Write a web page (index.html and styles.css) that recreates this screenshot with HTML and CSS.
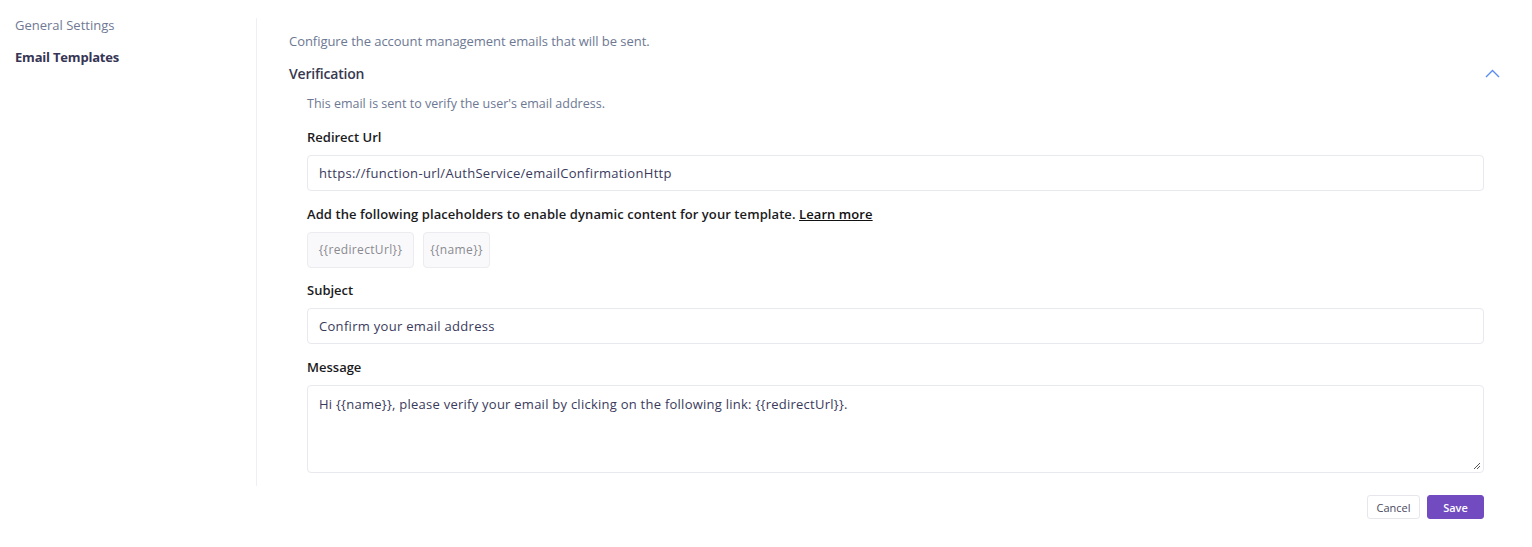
FILE: index.html
```html
<!DOCTYPE html>
<html>
<head>
<meta charset="utf-8">
<link rel="stylesheet" href="styles.css">
</head>
<body>
<div class="page">
  <div class="layout">
    <nav class="sidebar">
      <div class="nav-item">General Settings</div>
      <div class="nav-item active">Email Templates</div>
    </nav>
    <main class="main">
      <p class="intro">Configure the account management emails that will be sent.</p>
      <div class="section-head">
        <span class="section-title">Verification</span>
        <svg class="chevron" width="15" height="10" viewBox="0 0 15 10"><path d="M1 9 L7.5 2.5 L14 9" fill="none" stroke="#5b8def" stroke-width="1.4"/></svg>
      </div>
      <div class="section-body">
        <p class="desc">This email is sent to verify the user's email address.</p>
        <label class="label">Redirect Url</label>
        <div class="input">https://function-url/AuthService/emailConfirmationHttp</div>
        <p class="label help">Add the following placeholders to enable dynamic content for your template. <a class="link">Learn more</a></p>
        <div class="chips">
          <span class="chip chip-wide">{{redirectUrl}}</span>
          <span class="chip chip-narrow">{{name}}</span>
        </div>
        <label class="label label-after-chips">Subject</label>
        <div class="input">Confirm your email address</div>
        <label class="label">Message</label>
        <div class="textarea">Hi {{name}}, please verify your email by clicking on the following link: {{redirectUrl}}.
          <svg class="grip" width="8" height="8" viewBox="0 0 8 8"><path d="M7 1 L1 7 M7 4 L4 7" stroke="#555" stroke-width="1"/></svg>
        </div>
      </div>
    </main>
  </div>
  <div class="footer">
    <button class="btn btn-cancel">Cancel</button>
    <button class="btn btn-save">Save</button>
  </div>
</div>
</body>
</html>
```

FILE: styles.css
```css
* { box-sizing: border-box; }
body {
  margin: 0;
  background: #fff;
  font-family: "Open Sans", "Liberation Sans", sans-serif;
  font-size: 13px;
  color: #1d1d1f;
}
p { margin: 0; }
.page { padding-top: 18px; }
.layout { display: flex; }
.sidebar {
  width: 257px;
  border-right: 1px solid #efeff3;
  padding-left: 15px;
}
.nav-item {
  height: 20px;
  line-height: 20px;
  color: #6f7994;
  font-size: 13px;
  margin-bottom: 12px;
  margin-top: -3px;
}
.nav-item + .nav-item { margin-top: 0; }
.nav-item.active { font-weight: 700; color: #363553; letter-spacing: -0.2px; }
.main {
  flex: 1;
  padding: 13px 32px 13px 32px;
}
.intro {
  line-height: 20px;
  color: #6d7893;
  font-size: 13px;
  letter-spacing: -0.05px;
}
.section-head {
  display: flex;
  justify-content: space-between;
  align-items: center;
  height: 20px;
  margin-top: 12px;
}
.section-title { font-size: 14px; font-weight: 600; color: #383850; letter-spacing: -0.2px; }
.section-body { padding: 0 16px 0 18px; }
.desc {
  margin-top: 11px;
  line-height: 20px;
  color: #6d7893;
  font-size: 12.5px;
}
.label {
  display: block;
  margin-top: 13px;
  line-height: 20px;
  font-weight: 600;
  color: #1b1b1d;
  font-size: 13px;
}
.input {
  margin-top: 8px;
  height: 36px;
  line-height: 34px;
  border: 1px solid #e8e8ef;
  border-radius: 4px;
  padding: 0 11px;
  color: #3a3a5c;
  font-size: 13px;
  letter-spacing: 0.3px;
}
.help { margin-top: 13px; letter-spacing: 0.08px; }
.link { color: #111; text-decoration: underline; }
.chips {
  display: flex;
  gap: 9px;
  margin-top: 8px;
}
.chip {
  height: 36px;
  line-height: 34px;
  text-align: center;
  border: 1px solid #ececf0;
  border-radius: 4px;
  background: #f9f9fb;
  color: #8a8a90;
  font-size: 12px;
  letter-spacing: 0.35px;
}
.chip-wide { width: 107px; }
.chip-narrow { width: 67px; }
.label-after-chips { margin-top: 12px; }
.textarea {
  position: relative;
  margin-top: 8px;
  height: 88px;
  border: 1px solid #e8e8ef;
  border-radius: 4px;
  padding: 8px 11px;
  line-height: 20px;
  color: #3a3a5c;
  font-size: 13px;
  letter-spacing: 0.25px;
}
.grip { position: absolute; right: 2px; bottom: 2px; }
.footer {
  display: flex;
  justify-content: flex-end;
  gap: 7px;
  padding-right: 48px;
  margin-top: 9px;
}
.btn {
  height: 24px;
  border-radius: 3px;
  font-family: inherit;
  font-size: 11px;
  padding: 0 8px;
  cursor: pointer;
}
.btn-cancel { border: 1px solid #e6e6ec; background: #fff; color: #4a4a60; width: 53px; }
.btn-save { border: 1px solid #714bbf; background: #714bbf; color: #fff; font-weight: 600; width: 57px; }
```
